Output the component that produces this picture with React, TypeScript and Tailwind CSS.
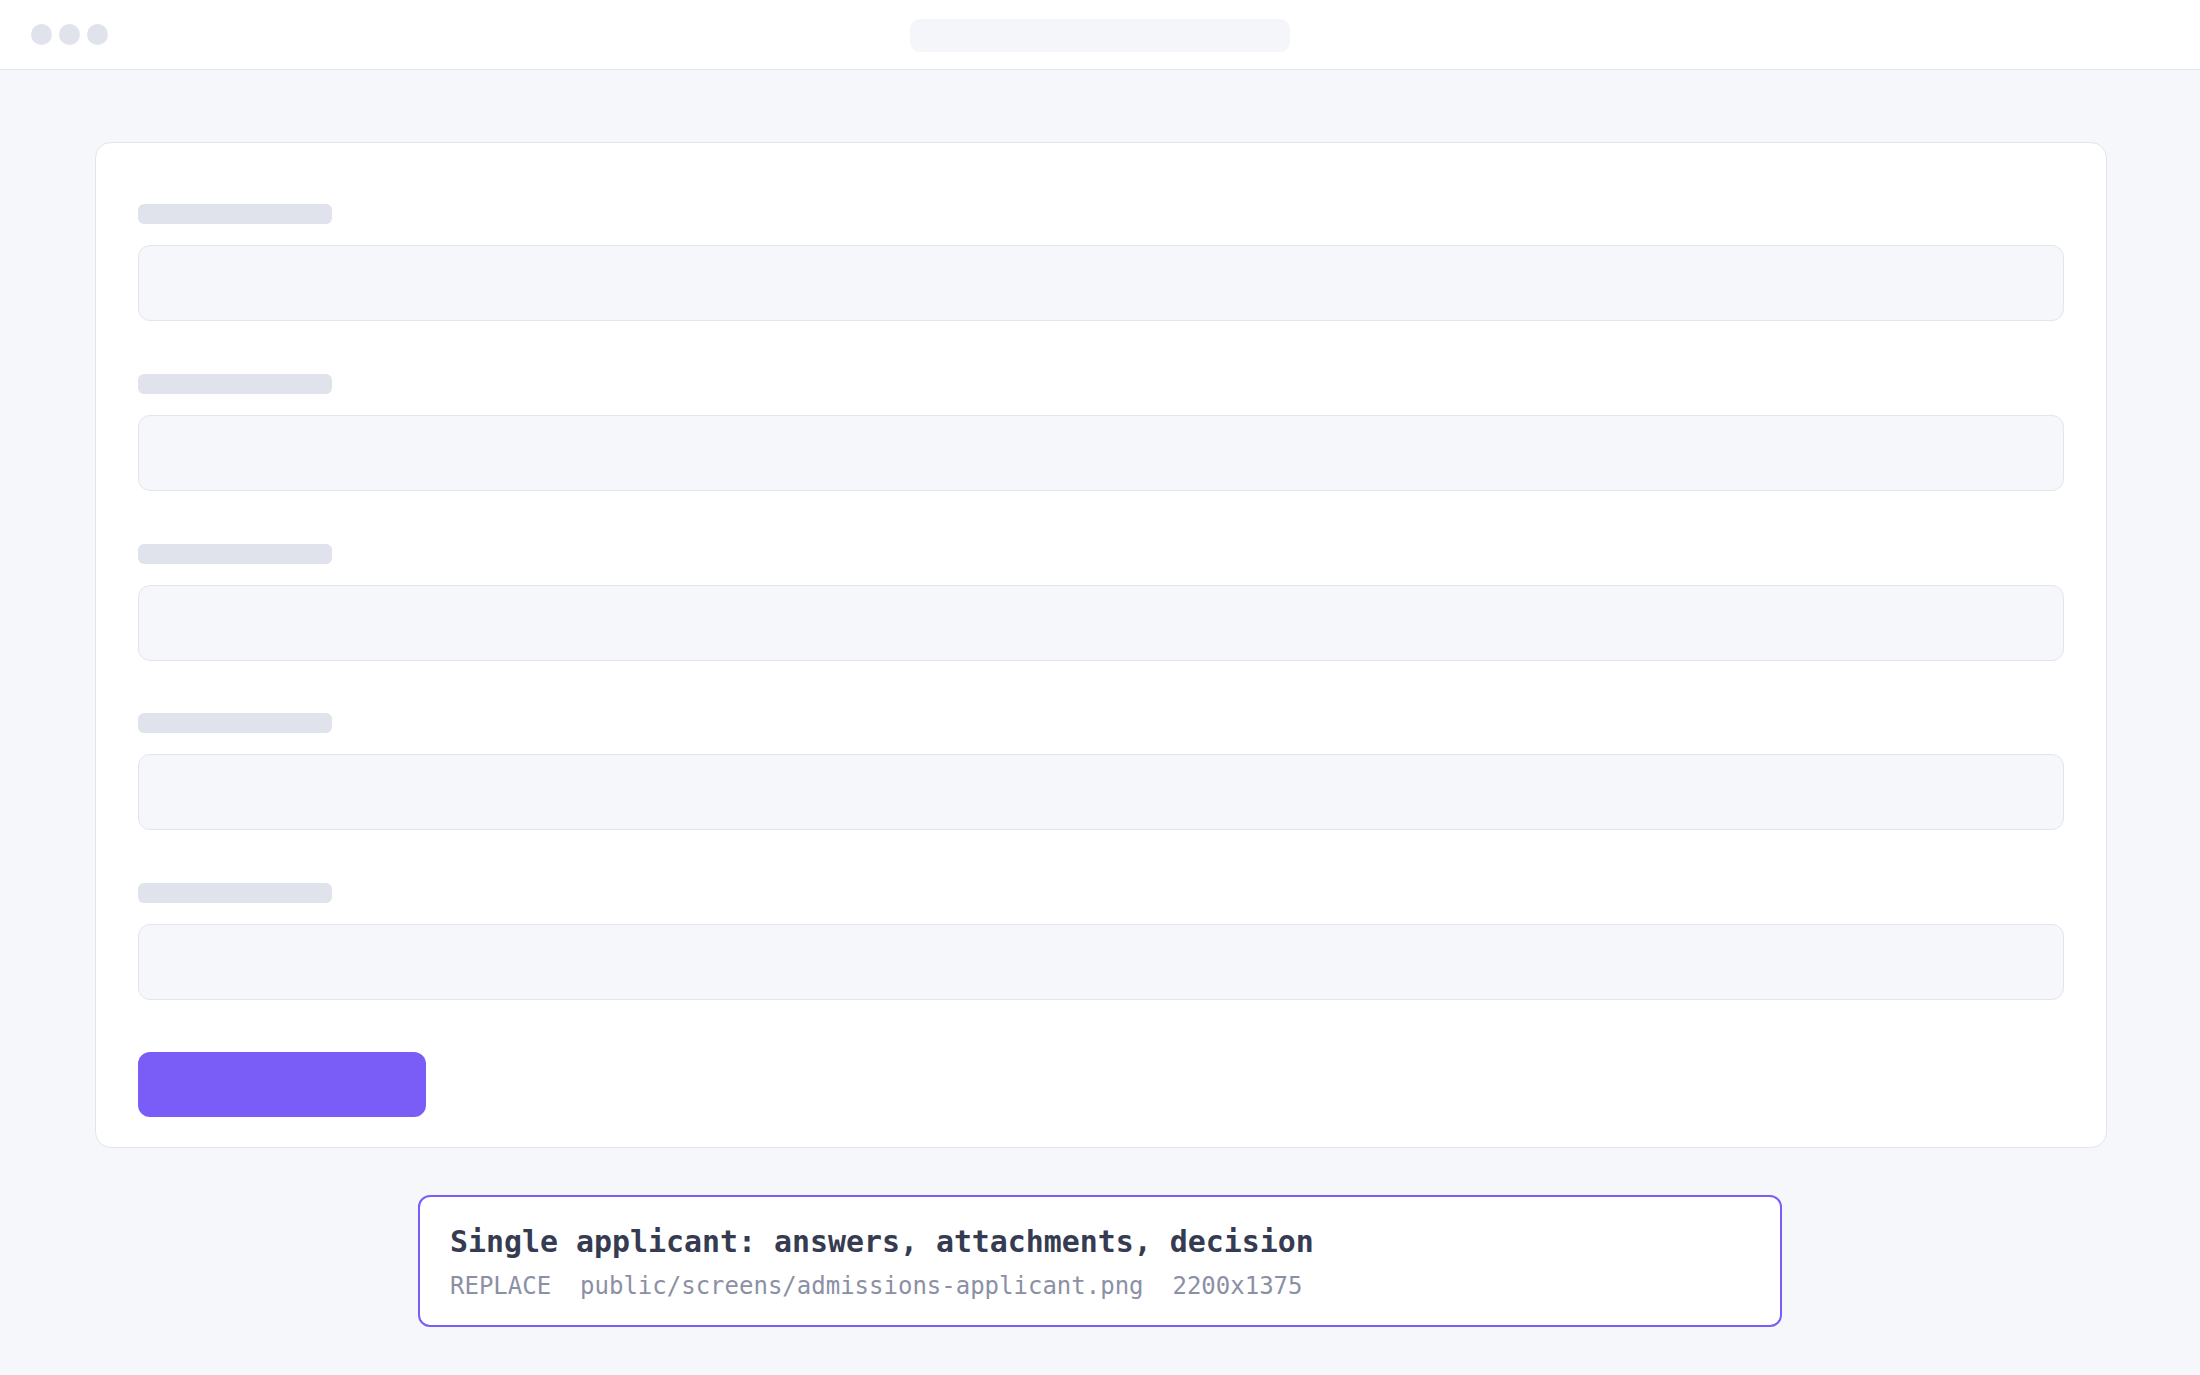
import React from "react";

const FIELDS = [0, 1, 2, 3, 4];

function WindowBar() {
  return (
    <div className="relative flex h-[70px] items-center border-b border-[#e3e5ee] bg-white">
      <div className="ml-[31px] flex gap-[7px]">
        <span className="h-[21px] w-[21px] rounded-full bg-[#e1e3ec]" />
        <span className="h-[21px] w-[21px] rounded-full bg-[#e1e3ec]" />
        <span className="h-[21px] w-[21px] rounded-full bg-[#e1e3ec]" />
      </div>
      <div className="absolute left-1/2 top-[19px] h-[33px] w-[380px] -translate-x-1/2 rounded-[10px] bg-[#f5f6fa]" />
    </div>
  );
}

function FieldSkeleton() {
  return (
    <div className="flex flex-col">
      <div className="h-[20px] w-[194px] rounded-md bg-[#e1e3ec]" />
      <div className="mt-[21px] h-[76px] w-full rounded-xl border border-[#e3e5ee] bg-[#f6f7fb]" />
    </div>
  );
}

function FormCard() {
  return (
    <div className="ml-[95px] mt-[72px] w-[2012px] rounded-2xl border border-[#e3e5ee] bg-white px-[42px] pb-[30px] pt-[61px]">
      <div className="flex flex-col gap-[52.75px]">
        {FIELDS.map((i) => (
          <FieldSkeleton key={i} />
        ))}
      </div>
      <div className="mt-[52px] h-[65px] w-[288px] rounded-xl bg-[#7a5cf6]" />
    </div>
  );
}

function Caption() {
  return (
    <div
      className="mx-auto mt-[47px] w-[1364px] rounded-xl border-2 border-[#7a5cf6] bg-white pb-[23px] pl-[30px] pt-[27px]"
      style={{ fontFamily: '"DejaVu Sans Mono", "Liberation Mono", monospace' }}
    >
      <div className="text-[29.9px] font-bold leading-[36px] text-[#353b51]">
        Single applicant: answers, attachments, decision
      </div>
      <div className="mt-[10px] whitespace-pre text-[24px] leading-[32px] text-[#8b90a5]">
        {"REPLACE  public/screens/admissions-applicant.png  2200x1375"}
      </div>
    </div>
  );
}

export default function App() {
  return (
    <div className="min-h-screen w-full bg-[#f6f7fb]">
      <WindowBar />
      <FormCard />
      <Caption />
    </div>
  );
}
